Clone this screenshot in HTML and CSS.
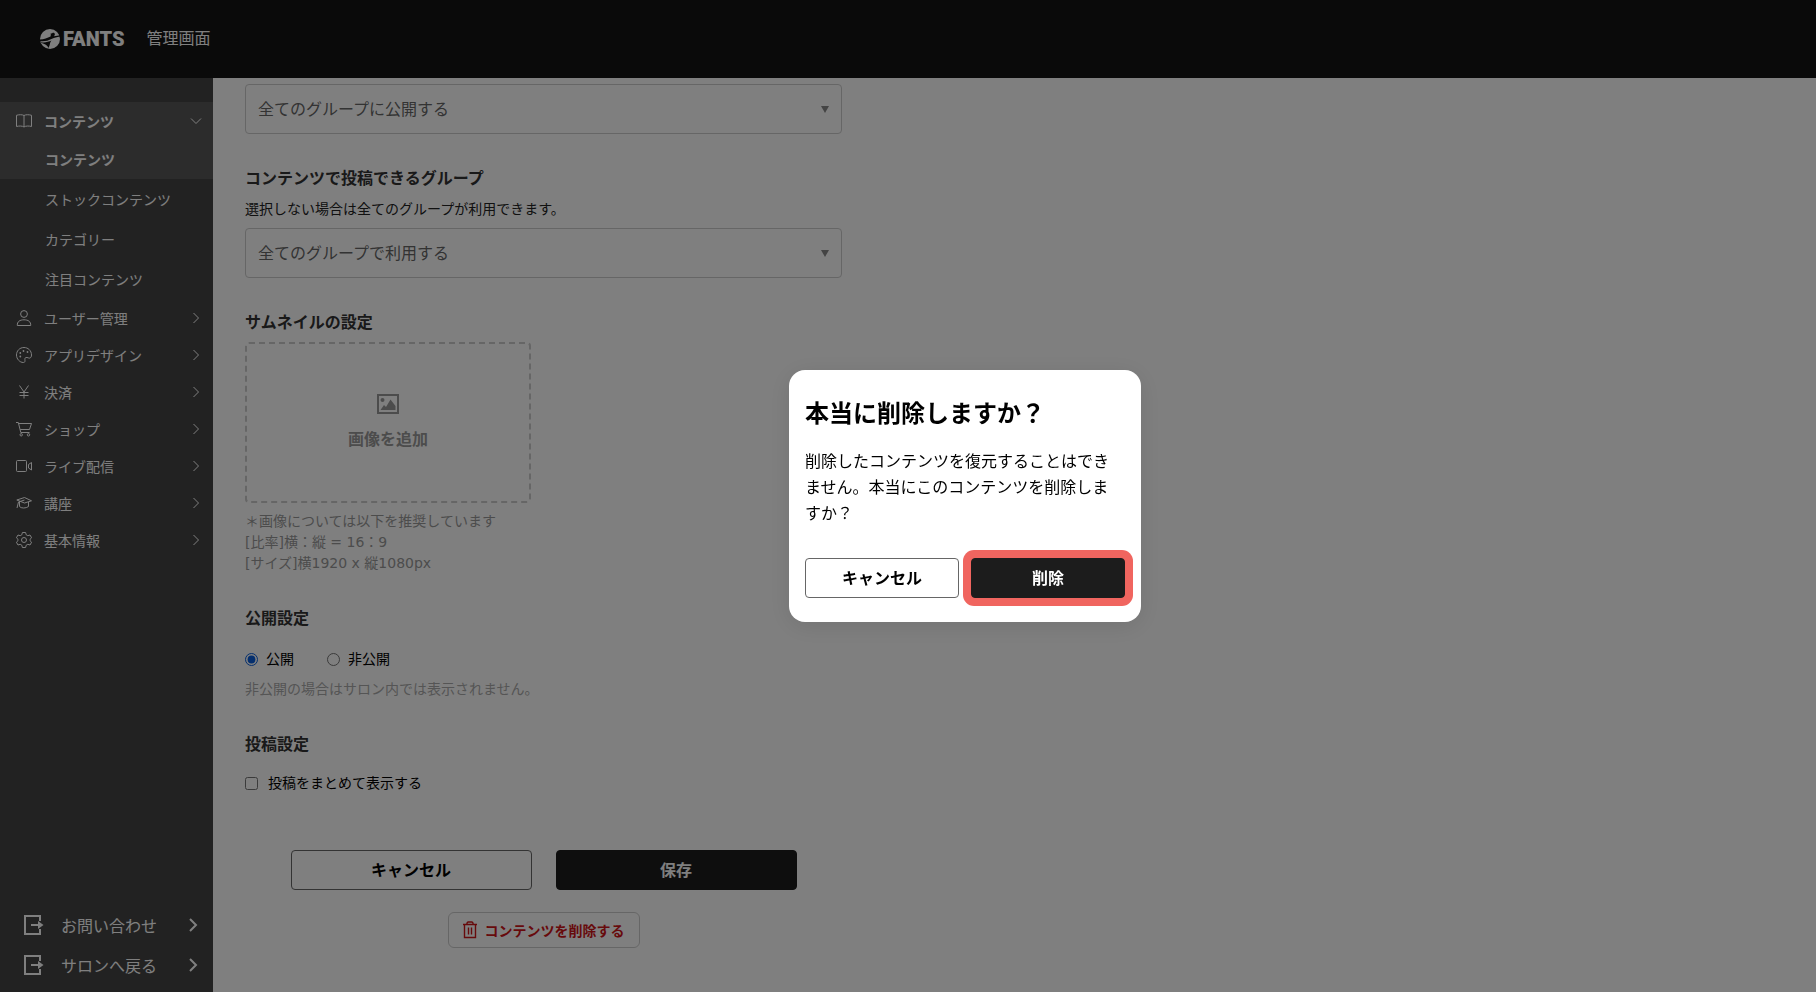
FILE: index.html
```html
<!DOCTYPE html>
<html lang="ja">
<head>
<meta charset="utf-8">
<meta name="viewport" content="width=device-width, initial-scale=1">
<title>FANTS 管理画面</title>
<link rel="stylesheet" href="styles.css">
</head>
<body>
<div class="page">
  <header class="header">
    <a class="logo" href="#" aria-label="FANTS">
      <svg class="logo-mark" viewBox="0 0 20 20" aria-hidden="true">
        <circle cx="10" cy="10" r="10" fill="#fff"/>
        <path d="M0 10.600C4 10 7.500 8.800 10.500 7.400L10.900 5.600L10.300 4.700L12.200 4.200C13.200 3.300 14.600 3.700 14.800 5C15 6 14.500 6.700 13.800 7.200C16 7.200 18.500 6.600 20 6V7.500C16.500 8.300 14.500 8.600 12 9.800C8 11.800 4.500 12.700 0 12.200Z" fill="#141414"/>
        <path d="M1 13.300C5 14 8.500 13 11.500 11.600C10.300 13 9.900 14.500 9.700 16L8.500 19C7.500 16.500 5 15 1 13.800Z" fill="#141414"/>
      </svg>
      <span class="logo-text">FANTS</span>
    </a>
    <span class="header-title">管理画面</span>
  </header>

  <div class="body">
    <nav class="sidebar">
      <ul class="menu">
        <li class="menu-active">
          <a class="menu-item" href="#">
            <svg class="icon" viewBox="0 0 16 16"><path d="M8 2.500C6.500 1.500 3 1.500.5 2.300V13.500C3 12.800 6.500 12.800 8 14C9.500 12.800 13 12.800 15.500 13.500V2.300C13 1.500 9.500 1.500 8 2.500ZM8 2.500V14"/></svg>
            <span>コンテンツ</span>
            <svg class="chevron" viewBox="0 0 12 12"><path d="M1 3.500L6 8.500L11 3.500"/></svg>
          </a>
          <a class="submenu-item" href="#">コンテンツ</a>
        </li>
        <li><a class="submenu-item" href="#">ストックコンテンツ</a></li>
        <li><a class="submenu-item" href="#">カテゴリー</a></li>
        <li><a class="submenu-item" href="#">注目コンテンツ</a></li>
        <li><a class="menu-item" href="#">
          <svg class="icon" viewBox="0 0 16 16"><circle cx="8" cy="4" r="3.400"/><path d="M1.300 15.500C1 11.500 4 9.800 8 9.800S15 11.500 14.700 15.500Z"/></svg>
          <span>ユーザー管理</span>
          <svg class="chevron" viewBox="0 0 12 12"><path d="M3.500 1L8.500 6L3.500 11"/></svg></a></li>
        <li><a class="menu-item" href="#">
          <svg class="icon" viewBox="0 0 16 16"><path d="M8 .5C3.500.5.500 4 .500 8S3.800 15.500 7.300 15.500C9.300 15.500 9 14 8.900 12.500C8.800 10.800 9.600 10.300 11 10.500C12.500 10.700 13 11.500 14 11C15 10.500 15.500 9.500 15.500 8C15.500 3.600 12 .5 8 .5Z"/><circle class="solid" cx="7.500" cy="4" r=".9"/><circle class="solid" cx="11.500" cy="5" r=".9"/><circle class="solid" cx="4.300" cy="6" r=".9"/><circle class="solid" cx="4.300" cy="9.500" r=".9"/></svg>
          <span>アプリデザイン</span>
          <svg class="chevron" viewBox="0 0 12 12"><path d="M3.500 1L8.500 6L3.500 11"/></svg></a></li>
        <li><a class="menu-item" href="#">
          <svg class="icon" viewBox="0 0 16 16"><path d="M3.500 1.500L8 8L12.500 1.500M8 8V14.500M3.500 8.500H12.500M3.500 11.500H12.500"/></svg>
          <span>決済</span>
          <svg class="chevron" viewBox="0 0 12 12"><path d="M3.500 1L8.500 6L3.500 11"/></svg></a></li>
        <li><a class="menu-item" href="#">
          <svg class="icon" viewBox="0 0 16 16"><path d="M0 1.500H2.300L4.800 11.500H13.500M2.700 2.500H15.500L13.500 8.500H4.200"/><circle cx="5.200" cy="13.800" r="1.200"/><circle cx="12.500" cy="13.800" r="1.200"/></svg>
          <span>ショップ</span>
          <svg class="chevron" viewBox="0 0 12 12"><path d="M3.500 1L8.500 6L3.500 11"/></svg></a></li>
        <li><a class="menu-item" href="#">
          <svg class="icon" viewBox="0 0 16 16"><rect x=".5" y="2.500" width="10" height="11" rx="1"/><path d="M12.500 6.500L15.500 4.500V12L12.500 10Z"/></svg>
          <span>ライブ配信</span>
          <svg class="chevron" viewBox="0 0 12 12"><path d="M3.500 1L8.500 6L3.500 11"/></svg></a></li>
        <li><a class="menu-item" href="#">
          <svg class="icon" viewBox="0 0 16 16"><path d="M.8 5L8.500 2.500L15.500 5.800L8.500 8L.8 5ZM3.500 6.500V11.500C5 13.500 10 13.500 12.500 11.500V7M8.500 5L2.500 7L1 13"/></svg>
          <span>講座</span>
          <svg class="chevron" viewBox="0 0 12 12"><path d="M3.500 1L8.500 6L3.500 11"/></svg></a></li>
        <li><a class="menu-item" href="#">
          <svg class="icon" viewBox="0 0 16 16"><circle cx="8" cy="8" r="2.500"/><path d="M6.400.5H9.600L10.200 2.800L11.800 3.700L14 3L15.600 5.800L14 7.300V8.700L15.600 10.200L14 13L11.800 12.300L10.200 13.200L9.600 15.500H6.400L5.800 13.200L4.200 12.300L2 13L.4 10.200L2 8.700V7.300L.4 5.800L2 3L4.200 3.700L5.800 2.800Z" stroke-linejoin="round"/></svg>
          <span>基本情報</span>
          <svg class="chevron" viewBox="0 0 12 12"><path d="M3.500 1L8.500 6L3.500 11"/></svg></a></li>
      </ul>
      <ul class="menu menu-bottom">
        <li><a class="exit-item" href="#">
          <svg class="exit-icon" viewBox="0 0 20 20"><path d="M16 6V1H1V19H16V14M7 10H15"/><path class="solid" d="M14 6L19.500 10L14 14Z"/></svg>
          <span>お問い合わせ</span>
          <svg class="exit-chevron" viewBox="0 0 10 14"><path d="M2 1L8 7L2 13"/></svg></a></li>
        <li><a class="exit-item" href="#">
          <svg class="exit-icon" viewBox="0 0 20 20"><path d="M16 6V1H1V19H16V14M7 10H15"/><path class="solid" d="M14 6L19.500 10L14 14Z"/></svg>
          <span>サロンへ戻る</span>
          <svg class="exit-chevron" viewBox="0 0 10 14"><path d="M2 1L8 7L2 13"/></svg></a></li>
      </ul>
    </nav>

    <main class="main">
      <form class="form">
        <div class="select-box">
          <select class="select" aria-label="公開するグループ"><option>全てのグループに公開する</option></select>
        </div>

        <section class="field">
          <label class="field-title" for="post-group">コンテンツで投稿できるグループ</label>
          <p class="field-lead">選択しない場合は全てのグループが利用できます。</p>
          <div class="select-box">
            <select class="select" id="post-group"><option>全てのグループで利用する</option></select>
          </div>
        </section>

        <section class="field">
          <h2 class="field-title">サムネイルの設定</h2>
          <button class="upload" type="button">
            <svg class="upload-icon" viewBox="0 0 22 20"><rect x="1" y="1" width="20" height="18"/><circle class="solid" cx="5.500" cy="6" r="2"/><path class="solid" d="M3.500 16L7 11L9 13L13.500 5.500L18.500 12V16Z"/></svg>
            <span>画像を追加</span>
          </button>
          <p class="note">＊画像については以下を推奨しています<br>[比率]横：縦 = 16：9<br>[サイズ]横1920 x 縦1080px</p>
        </section>

        <section class="field">
          <h2 class="field-title">公開設定</h2>
          <div class="choices">
            <label class="choice"><input class="choice-input" type="radio" name="open" checked>公開</label>
            <label class="choice"><input class="choice-input" type="radio" name="open">非公開</label>
          </div>
          <p class="hint">非公開の場合はサロン内では表示されません。</p>
        </section>

        <section class="field">
          <h2 class="field-title">投稿設定</h2>
          <div class="choices choices-check">
            <label class="choice choice-check"><input class="choice-input" type="checkbox">投稿をまとめて表示する</label>
          </div>
        </section>

        <div class="actions">
          <button class="button" type="button">キャンセル</button>
          <button class="button button-dark" type="button">保存</button>
        </div>
        <button class="delete" type="button">
          <svg class="trash" viewBox="0 0 14 18"><path d="M0 3.500H14M1.500 3.500V16.500H12.500V3.500M4 3.500V2L5 1H9L10 2V3.500M5.500 6.500V13.500M8.500 6.500V13.500"/></svg>
          <span>コンテンツを削除する</span>
        </button>
      </form>
    </main>
  </div>
</div>

<div class="overlay">
  <div class="dialog" role="dialog" aria-modal="true" aria-labelledby="dialog-title">
    <h1 class="dialog-title" id="dialog-title">本当に削除しますか？</h1>
    <p class="dialog-text">削除したコンテンツを復元することはできません。本当にこのコンテンツを削除しますか？</p>
    <div class="dialog-actions">
      <button class="button" type="button">キャンセル</button>
      <button class="button button-dark button-ring" type="button">削除</button>
    </div>
  </div>
</div>
</body>
</html>
```
FILE: styles.css
```css
* {
  box-sizing: border-box;
}

body {
  margin: 0;
  font-family: "Liberation Sans", "Noto Sans CJK JP", sans-serif;
  font-size: 14px;
  color: #000;
}

button,
select {
  font-family: inherit;
}

h1,
h2,
p,
ul {
  margin: 0;
  padding: 0;
}

li {
  list-style: none;
}

a {
  color: inherit;
  text-decoration: none;
}

svg {
  fill: none;
  stroke: currentColor;
  flex: none;
}

.solid {
  fill: currentColor;
  stroke: none;
}

.page {
  display: flex;
  flex-direction: column;
  min-height: 100vh;
}

.header {
  display: flex;
  align-items: center;
  gap: 22px;
  height: 78px;
  padding: 0 40px;
  background: #141414;
  color: #fff;
}

.logo {
  display: flex;
  align-items: center;
  gap: 3px;
}

.logo-mark {
  width: 20px;
  height: 20px;
  stroke: none;
}

.logo-text {
  font-family: Roboto, sans-serif;
  font-size: 20px;
  font-weight: 900;
  line-height: 24px;
}

.header-title {
  font-size: 16px;
  line-height: 24px;
}

.body {
  display: flex;
  flex: 1;
}

.sidebar {
  display: flex;
  flex-direction: column;
  justify-content: space-between;
  width: 213px;
  flex: none;
  padding: 24px 0 6px;
  background: #444;
  color: #fff;
}

.menu-active {
  background: #585858;
  font-weight: 700;
}

.menu-item {
  display: grid;
  grid-template-columns: 16px 1fr 12px;
  align-items: center;
  gap: 12px;
  height: 37px;
  padding: 0 11px 0 16px;
}

.icon {
  width: 16px;
  height: 16px;
}

.chevron {
  width: 12px;
  height: 12px;
}

.submenu-item {
  display: flex;
  align-items: center;
  height: 40px;
  padding-left: 45px;
}

.exit-item {
  display: grid;
  grid-template-columns: 20px 1fr 10px;
  align-items: center;
  gap: 17px;
  height: 40px;
  padding: 0 15px 2px 24px;
  font-size: 16px;
}

.exit-icon {
  width: 20px;
  height: 20px;
  stroke-width: 2;
}

.exit-chevron {
  width: 10px;
  height: 14px;
  stroke-width: 2;
}

.main {
  flex: 1;
  padding: 6px 32px 44px;
}

.form {
  display: flex;
  flex-direction: column;
  max-width: 597px;
}

.select-box {
  position: relative;
}

.select-box::after {
  content: "";
  position: absolute;
  top: 22px;
  right: 13px;
  width: 8px;
  height: 7px;
  background: #888;
  clip-path: polygon(0 0, 100% 0, 50% 100%);
  pointer-events: none;
}

.select {
  display: block;
  width: 100%;
  height: 50px;
  padding: 0 12px;
  border: 1px solid #ccc;
  border-radius: 4px;
  background: #fff;
  color: #666;
  font-size: 16px;
  appearance: none;
}

.field {
  display: flex;
  flex-direction: column;
  align-items: stretch;
  padding-top: 33px;
}

.field-title {
  color: #333;
  font-size: 16px;
  font-weight: 700;
  line-height: 24px;
}

.field-lead {
  padding: 7px 0 8px;
  color: #222;
  line-height: 22px;
}

.upload {
  display: flex;
  flex-direction: column;
  align-items: center;
  justify-content: center;
  gap: 14px;
  width: 286px;
  height: 161px;
  margin-top: 7px;
  border: 2px dashed #ccc;
  border-radius: 4px;
  background: #fff;
  color: #999;
  font-size: 16px;
  font-weight: 700;
  line-height: 24px;
}

.upload-icon {
  width: 22px;
  height: 20px;
  stroke-width: 2;
}

.note {
  padding-top: 8px;
  color: #999;
  font-family: "DejaVu Sans", "Noto Sans CJK JP", sans-serif;
  line-height: 21px;
}

.choices {
  display: flex;
  gap: 33px;
  padding-top: 16px;
}

.choices-check {
  padding-top: 14px;
}

.choice {
  display: flex;
  align-items: center;
  gap: 8px;
  line-height: 24px;
}

.choice-check {
  gap: 10px;
}

.choice-input {
  width: 13px;
  height: 13px;
  margin: 0;
  accent-color: #0a5fdc;
}

.hint {
  padding-top: 7px;
  color: #aaa;
  line-height: 22px;
}

.actions {
  display: flex;
  justify-content: center;
  gap: 24px;
  padding-top: 55px;
}

.button {
  flex: 1;
  max-width: 241px;
  height: 40px;
  padding: 0 0 2px;
  border: 1px solid #666;
  border-radius: 4px;
  background: #fff;
  color: #000;
  font-size: 16px;
  font-weight: 700;
}

.button-dark {
  border-color: #1c1c1c;
  background: #1c1c1c;
  color: #fff;
}

.delete {
  display: flex;
  align-items: center;
  align-self: center;
  gap: 8px;
  height: 36px;
  margin-top: 22px;
  padding: 0 14px 1px;
  border: 1px solid #ccc;
  border-radius: 6px;
  background: #fff;
  color: #cf1518;
  font-size: 14px;
  font-weight: 700;
}

.trash {
  width: 14px;
  height: 18px;
  stroke-width: 1.400;
}

.overlay {
  position: fixed;
  inset: 0;
  display: flex;
  align-items: center;
  justify-content: center;
  padding-left: 114px;
  background: rgba(0, 0, 0, 0.5);
}

.dialog {
  width: 352px;
  padding: 26px 16px 24px;
  border-radius: 16px;
  background: #fff;
  box-shadow: 0 4px 24px rgba(0, 0, 0, 0.1);
}

.dialog-title {
  font-size: 24px;
  line-height: 36px;
}

.dialog-text {
  padding: 17px 8px 31px 0;
  font-size: 16px;
  line-height: 26px;
}

.dialog-actions {
  display: flex;
  gap: 12px;
}

.button-ring {
  box-shadow: 0 0 0 8px #f0655f;
}
```
